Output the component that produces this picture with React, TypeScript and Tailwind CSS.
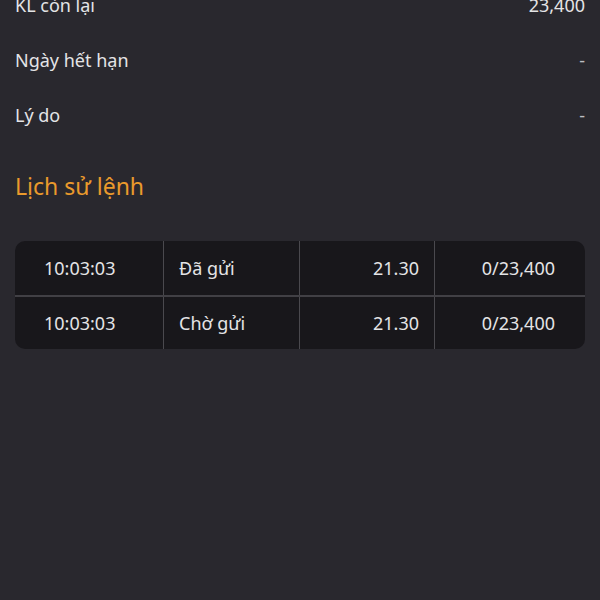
import React from 'react';

const info = [
  { label: 'KL còn lại', value: '23,400' },
  { label: 'Ngày hết hạn', value: '-' },
  { label: 'Lý do', value: '-' },
];

const history = [
  { time: '10:03:03', status: 'Đã gửi', price: '21.30', qty: '0/23,400' },
  { time: '10:03:03', status: 'Chờ gửi', price: '21.30', qty: '0/23,400' },
];

export default function App() {
  return (
    <div
      className="w-[600px] h-[600px] overflow-hidden bg-[#29282e] text-[#e4e4e6]"
      style={{ fontFamily: '"Noto Sans", "Open Sans", sans-serif' }}
    >
      <div className="-mt-[22px] px-[15px]">
        {info.map((row) => (
          <div key={row.label} className="h-[55px] flex items-center justify-between text-[18px]">
            <span>{row.label}</span>
            <span className={row.value === '-' ? 'text-[#bdbdc2]' : ''}>{row.value}</span>
          </div>
        ))}
      </div>

      <h2 className="mt-[28px] px-[15px] h-[30px] flex items-center text-[23px] text-[#ea9a2c]">
        Lịch sử lệnh
      </h2>

      <div className="mx-[15px] mt-[40px] rounded-[10px] bg-[#18171b] overflow-hidden">
        {history.map((h, i) => (
          <div
            key={i}
            className={`grid grid-cols-[149px_136px_135px_1fr] h-[54px] text-[18px] ${
              i > 0 ? 'border-t-2 border-[#414045]' : ''
            }`}
          >
            <div className="flex items-center pl-[29px] border-r border-[#4a494e]">{h.time}</div>
            <div className="flex items-center pl-[15px] border-r border-[#4a494e]">{h.status}</div>
            <div className="flex items-center justify-end pr-[15px] border-r border-[#4a494e]">{h.price}</div>
            <div className="flex items-center justify-end pr-[30px]">{h.qty}</div>
          </div>
        ))}
      </div>
    </div>
  );
}
